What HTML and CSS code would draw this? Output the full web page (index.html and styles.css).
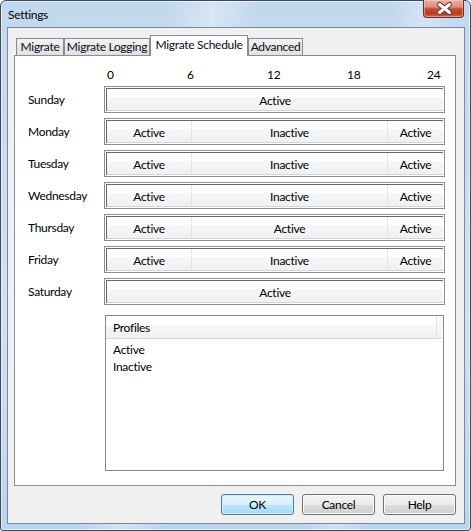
FILE: index.html
```html
<!DOCTYPE html>
<html lang="en">
<head>
<meta charset="utf-8">
<title>Settings</title>
<link rel="stylesheet" href="styles.css">
</head>
<body>
<div class="window">
  <div class="titlebar">
    <span class="title">Settings</span>
    <button class="close" aria-label="Close">
      <svg width="41" height="17" viewBox="0 0 41 17">
        <path d="M15.5 4.5 L25.5 12.5 M25.5 4.5 L15.5 12.5" stroke="#6b3a32" stroke-width="5" stroke-linecap="round" fill="none"/>
        <path d="M15.5 4.5 L25.5 12.5 M25.5 4.5 L15.5 12.5" stroke="#ffffff" stroke-width="3" stroke-linecap="round" fill="none"/>
      </svg>
    </button>
  </div>
  <div class="client">
    <div class="tabstrip">
      <div class="tab w-migrate">Migrate</div>
      <div class="tab w-logging">Migrate Logging</div>
      <div class="tab tab-active w-schedule">Migrate Schedule</div>
      <div class="tab w-advanced">Advanced</div>
    </div>
    <div class="panel">
      <div class="scale">
        <span>0</span><span>6</span><span>12</span><span>18</span><span>24</span>
      </div>
      <div class="rows">
        <div class="row">
          <span class="day">Sunday</span>
          <div class="bar"><div class="bar-inner">
            <span class="seg seg-fill">Active</span>
          </div></div>
        </div>
        <div class="row">
          <span class="day">Monday</span>
          <div class="bar"><div class="bar-inner">
            <span class="seg seg-am">Active</span><span class="seg seg-mid">Inactive</span><span class="seg seg-fill">Active</span>
          </div></div>
        </div>
        <div class="row">
          <span class="day">Tuesday</span>
          <div class="bar"><div class="bar-inner">
            <span class="seg seg-am">Active</span><span class="seg seg-mid">Inactive</span><span class="seg seg-fill">Active</span>
          </div></div>
        </div>
        <div class="row">
          <span class="day">Wednesday</span>
          <div class="bar"><div class="bar-inner">
            <span class="seg seg-am">Active</span><span class="seg seg-mid">Inactive</span><span class="seg seg-fill">Active</span>
          </div></div>
        </div>
        <div class="row">
          <span class="day">Thursday</span>
          <div class="bar"><div class="bar-inner">
            <span class="seg seg-am">Active</span><span class="seg seg-mid">Active</span><span class="seg seg-fill">Active</span>
          </div></div>
        </div>
        <div class="row">
          <span class="day">Friday</span>
          <div class="bar"><div class="bar-inner">
            <span class="seg seg-am">Active</span><span class="seg seg-mid">Inactive</span><span class="seg seg-fill">Active</span>
          </div></div>
        </div>
        <div class="row">
          <span class="day">Saturday</span>
          <div class="bar"><div class="bar-inner">
            <span class="seg seg-fill">Active</span>
          </div></div>
        </div>
      </div>
      <div class="profiles">
        <div class="profiles-head">
          <span class="head-col">Profiles</span><span class="head-rest"></span>
        </div>
        <ul class="profile-list">
          <li>Active</li>
          <li>Inactive</li>
        </ul>
      </div>
    </div>
    <div class="buttons">
      <button class="btn btn-default">OK</button>
      <button class="btn">Cancel</button>
      <button class="btn">Help</button>
    </div>
  </div>
</div>
</body>
</html>
```
FILE: styles.css
```css
* { box-sizing: border-box; }

html, body {
  margin: 0;
  padding: 0;
  background: #ffffff;
  overflow: hidden;
}

body {
  font-family: Lato, "Noto Sans", sans-serif;
  font-size: 12px;
  letter-spacing: -0.3px;
  color: #000;
}

.window {
  width: 471px;
  height: 531px;
  border: 1px solid #3e4a56;
  border-radius: 6px 6px 3px 3px;
  padding: 0 5px 6px 6px;
  background:
    linear-gradient(100deg, rgba(255,255,255,0) 30%, rgba(255,255,255,0.35) 38%, rgba(255,255,255,0) 46%, rgba(255,255,255,0) 70%, rgba(255,255,255,0.3) 76%, rgba(255,255,255,0) 82%),
    linear-gradient(#c2d8ef, #cfe1f4 60%, #bcd4ee);
  box-shadow: inset 0 0 0 1px rgba(255,255,255,0.55);
  display: flex;
  flex-direction: column;
}

.titlebar {
  height: 26px;
  display: flex;
  align-items: flex-start;
  padding-left: 1px;
}

.title {
  line-height: 14px;
  margin-top: 7px;
  font-size: 12px;
  color: #000;
}

.close {
  margin-left: auto;
  margin-right: 1px;
  margin-top: -1px;
  width: 41px;
  height: 18px;
  padding: 0;
  border: 1px solid #6b2c20;
  border-top: none;
  border-radius: 0 0 4px 4px;
  background: linear-gradient(#eab0a2 0%, #dc8f7c 40%, #c84a33 52%, #bd3a22 80%, #d06a50 100%);
  box-shadow: inset 0 0 0 1px rgba(255,220,210,0.45);
  display: block;
}

.close svg { display: block; }

.client {
  flex: 1;
  border: 1px solid #7d8896;
  background: #f0f0f0;
  display: flex;
  flex-direction: column;
}

/* Tabs */
.tabstrip {
  display: flex;
  align-items: flex-end;
  height: 20px;
  margin: 7px 0 0 8px;
  position: relative;
  z-index: 1;
}

.tab {
  height: 17px;
  border: 1px solid #898c95;
  border-bottom: none;
  background: linear-gradient(#f4f4f4, #e8e8e8 50%, #e1e1e1);
  line-height: 16px;
  text-align: center;
  white-space: nowrap;
  color: #0a0a1e;
}

.tab-active {
  height: 21px;
  margin-bottom: -1px;
  background: #fff;
  line-height: 18px;
}

.w-migrate { width: 48px; }
.w-logging { width: 86px; }
.w-schedule { width: 98px; }
.w-advanced { width: 55px; }

.panel {
  margin-left: 6px;
  width: 442px;
  height: 431px;
  border: 1px solid #898c95;
  background: #fff;
  padding: 12px 10px 0 13px;
}

.scale {
  display: flex;
  margin-left: 79px;
  height: 14px;
  line-height: 14px;
  margin-bottom: 4px;
}

.scale span { width: 80px; flex: none; }
.scale span:last-child { width: auto; }

.rows {
  display: flex;
  flex-direction: column;
  gap: 5px;
}

.row {
  display: flex;
  align-items: center;
  height: 27px;
}

.day {
  width: 76px;
  flex: none;
  line-height: 14px;
}

.bar {
  width: 341px;
  height: 27px;
  border: 1px solid #8c8e92;
  padding: 1px;
  background: #fff;
}

.bar-inner {
  height: 23px;
  display: flex;
  border-top: 1px solid #696969;
  border-left: 1px solid #696969;
  box-shadow: inset 1px 1px 0 #b4b4b4;
}

.seg {
  height: 22px;
  padding-top: 3px;
  line-height: 18px;
  text-align: center;
  border-bottom: 1px solid #d5d5d5;
  border-right: 1px solid #e2e4e7;
  background: linear-gradient(#ffffff 0, #ffffff 40%, #f6f7f8 40%, #eff0f2 100%);
  white-space: nowrap;
}

.seg-am { width: 85px; flex: none; }
.seg-mid { width: 196px; flex: none; }
.seg-fill { flex: 1; border-right: none; }

/* Profiles list */
.profiles {
  margin: 10px 0 0 77px;
  width: 339px;
  height: 156px;
  border: 1px solid #828790;
  background: #fff;
}

.profiles-head {
  display: flex;
  height: 23px;
  margin-right: 1px;
  border-bottom: 1px solid #d5d5d5;
  background: linear-gradient(#ffffff 0, #ffffff 40%, #f6f7f8 40%, #eff0f2 100%);
}

.head-col {
  flex: 1;
  padding-left: 7px;
  line-height: 24px;
  border-right: 1px solid #e2e4e7;
}

.head-rest {
  width: 5px;
  flex: none;
  background: linear-gradient(#fbfbfb, #f1f1f1);
}

.profile-list {
  list-style: none;
  margin: 0;
  padding: 2px 0 0 7px;
}

.profile-list li {
  height: 17px;
  line-height: 17px;
}

/* Buttons */
.buttons {
  display: flex;
  justify-content: flex-end;
  gap: 8px;
  margin: 8px 8px 0 0;
}

.btn {
  width: 73px;
  height: 21px;
  padding: 0;
  font: inherit;
  letter-spacing: inherit;
  color: #000;
  border: 1px solid #707070;
  border-radius: 3px;
  background: linear-gradient(#f2f2f2 0%, #ebebeb 50%, #dddddd 50%, #cfcfcf 100%);
  box-shadow: inset 0 0 0 1px #fbfbfb;
  line-height: 18px;
}

.btn-default {
  border-color: #3c7fb1;
  background: linear-gradient(#eaf6fd 0%, #d9f0fc 50%, #bee6fd 50%, #a7d9f5 100%);
  box-shadow: inset 0 0 0 1px #d6eefb;
}
```
